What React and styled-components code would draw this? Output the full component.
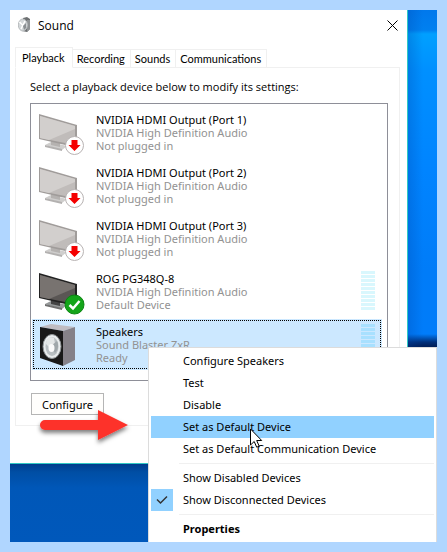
import React from "react";
import styled, { createGlobalStyle } from "styled-components";

const GlobalStyle = createGlobalStyle`
  * { box-sizing: border-box; }
  body {
    margin: 0;
    background: #b0d6ff;
    color: #000;
    font-family: "Noto Sans", "Open Sans", sans-serif;
    font-size: 11px;
  }
`;

const Page = styled.main`
  padding: 10px;
`;

const Desktop = styled.div`
  position: relative;
  overflow: hidden;
  padding: 0 29px 78px 0;
  background:
    linear-gradient(#003c8c, #004ea4 8px, #0057b8 24px, #0058bb) bottom / 100% 78px no-repeat,
    linear-gradient(90deg, rgba(0, 70, 170, 0.3), transparent 16px) right / 30px 100% no-repeat,
    linear-gradient(#0078ec, #0080f0 20px, #00a0ff 24px, #0090ff 60px, #0084ff 160px, #007cf8 260px, #007cfa 324px, #00307c 332px, #00205c 336px);
`;

const Window = styled.section`
  background: #fff;
  border-right: 1px solid #30c8c4;
  border-bottom: 1px solid #30c8c4;
`;

const TitleBar = styled.header`
  display: flex;
  align-items: center;
  gap: 7px;
  height: 30px;
  padding: 0 9px 0 8px;
`;

const Title = styled.h1`
  flex: 1;
  margin: 0;
  font-family: "Open Sans", "Noto Sans", sans-serif;
  font-size: 12px;
  font-weight: 400;
`;

const CloseButton = styled.button`
  display: flex;
  padding: 0;
  border: 0;
  background: none;
`;

const WindowBody = styled.div`
  padding: 7px 7px 37px 5px;
`;

const TabList = styled.div`
  display: flex;
  align-items: flex-end;
  height: 21px;
  margin-bottom: -1px;
`;

const Tab = styled.button`
  height: ${({ $active }) => ($active ? 21 : 19)}px;
  padding: 0 ${({ $active }) => ($active ? 7 : 5)}px 0 ${({ $active }) => ($active ? 6 : 4)}px;
  border: 1px solid #f0f0f0;
  border-left-width: ${({ $active }) => ($active ? 1 : 0)}px;
  border-bottom-color: ${({ $active }) => ($active ? "#fff" : "#f0f0f0")};
  background: #fff;
  color: #000;
  font-family: Lato, "Open Sans", sans-serif;
  font-size: 11px;
  line-height: 17px;
`;

const Panel = styled.div`
  padding: 10px 11px;
  border: 1px solid #f0f0f0;
`;

const Hint = styled.p`
  margin: 0 0 7px 3px;
  font-family: "Open Sans", "Noto Sans", sans-serif;
  line-height: 18px;
`;

const DeviceList = styled.ul`
  display: flex;
  flex-direction: column;
  gap: 2px;
  height: 278px;
  margin: 0 0 12px 3px;
  padding: 3px 5px 0 1px;
  border: 1px solid #8e8f98;
  list-style: none;
`;

const Device = styled.li`
  display: flex;
  gap: 11px;
  height: 51px;
  padding: 5px 7px;
  background: ${({ $selected }) => ($selected ? "#cce8ff" : "#fff")};
  outline: ${({ $selected }) => ($selected ? "1px dotted #000" : "none")};
  outline-offset: -2px;
`;

const DeviceText = styled.div`
  flex: 1;
  padding-top: 1px;
  line-height: 13px;
  white-space: nowrap;
`;

const DeviceName = styled.div`
  color: #000;
`;

const DeviceInfo = styled.div`
  color: #929292;
`;

const Meter = styled.div`
  display: grid;
  grid-auto-rows: 3px;
  gap: 1px;
  width: 14px;
`;

const MeterBar = styled.span`
  background: ${({ $selected }) => ($selected ? "#a8e0ff" : "#d9f7fd")};
`;

const ConfigureButton = styled.button`
  display: block;
  width: 73px;
  height: 22px;
  margin-left: 4px;
  padding: 0;
  border: 1px solid #b5b5b5;
  background: #fffefc;
  color: #000;
  font: inherit;
`;

const Menu = styled.div`
  position: absolute;
  top: 337px;
  left: 138px;
  right: 0;
  padding: 2px 2px 6px;
  border: 1px solid #dcdcdc;
  background: #fff;
`;

const MenuItem = styled.button`
  display: flex;
  align-items: center;
  gap: 10px;
  width: 100%;
  height: 22px;
  padding: 0;
  border: 0;
  background: ${({ $active }) => ($active ? "#91d1ff" : "transparent")};
  color: #000;
  font: inherit;
  font-weight: ${({ $bold }) => ($bold ? 700 : 400)};
  line-height: 20px;
  text-align: left;
  white-space: nowrap;
`;

const MenuCheck = styled.span`
  display: grid;
  place-items: center;
  width: 22px;
  height: 22px;
  background: ${({ $checked }) => ($checked ? "#91d1ff" : "transparent")};
`;

const Separator = styled.hr`
  height: 1px;
  margin: 3px 0 3px 28px;
  border: 0;
  background: #f0f0f0;
`;

const Arrow = styled.svg`
  position: absolute;
  top: 395px;
  left: 26px;
`;

const Cursor = styled.svg`
  position: absolute;
  top: 418px;
  left: 240px;
`;

const devices = [
  { name: "NVIDIA HDMI Output (Port 1)", info: "NVIDIA High Definition Audio", state: "Not plugged in", icon: "off" },
  { name: "NVIDIA HDMI Output (Port 2)", info: "NVIDIA High Definition Audio", state: "Not plugged in", icon: "off" },
  { name: "NVIDIA HDMI Output (Port 3)", info: "NVIDIA High Definition Audio", state: "Not plugged in", icon: "off" },
  { name: "ROG PG348Q-8", info: "NVIDIA High Definition Audio", state: "Default Device", icon: "default", meter: true },
  { name: "Speakers", info: "Sound Blaster ZxR", state: "Ready", icon: "speaker", meter: true, selected: true },
];

const menuItems = [
  { label: "Configure Speakers" },
  { label: "Test" },
  { label: "Disable" },
  { label: "Set as Default Device", active: true },
  { label: "Set as Default Communication Device" },
  null,
  { label: "Show Disabled Devices" },
  { label: "Show Disconnected Devices", checked: true },
  null,
  { label: "Properties", bold: true },
];

const tabs = ["Playback", "Recording", "Sounds", "Communications"];

function SoundIcon() {
  return (
    <svg width="13" height="16" viewBox="0 0 13 16" aria-hidden="true">
      <path d="M5 1l4-1 3 2v10l-3 3-5-1z" fill="#6d7072" />
      <path d="M9 3l3 0v9l-3 3z" fill="#8e9294" />
      <ellipse cx="4.800" cy="8" rx="4.500" ry="6" fill="#d4d8da" stroke="#b9bdbf" />
      <path d="M1.500 5l3 3M7 4L3 12" stroke="#fff" strokeWidth="1.500" />
      <path d="M5 9l3-3v5l-2 2z" fill="#8b9093" />
    </svg>
  );
}

function MonitorIcon({ plugged }) {
  return (
    <svg width="46" height="44" viewBox="0 0 46 44" aria-hidden="true">
      <path d="M6 33l6-3 16 4-5 4z" fill={plugged ? "#96999a" : "#cfcecd"} />
      <path d="M6 33l17 4v2L6 35z" fill={plugged ? "#707070" : "#b3b1b0"} />
      <path d="M12 28l9 3v4l-9-2z" fill={plugged ? "#444" : "#b5b2b0"} />
      <path d="M0 2l38 11v20l-3 2L0 27z" fill={plugged ? "#222" : "#a09c9a"} />
      <path d="M1 4l35 10v19L1 26z" fill={plugged ? "#5a5654" : "#c0bcba"} />
      <path d="M1 4l35 10v3L10 28l-9-2z" fill={plugged ? "#787370" : "#d2cfcd"} />
      {plugged ? (
        <g>
          <circle cx="35.500" cy="33.500" r="9.500" fill="#14a51a" stroke="#0a8511" />
          <path d="M30.500 34l3.500 3.500 6.500-7.500" fill="none" stroke="#fff" strokeWidth="2.500" />
        </g>
      ) : (
        <g>
          <circle cx="35.500" cy="33.500" r="9" fill="#fff" stroke="#b8b3b3" />
          <path d="M32.500 28h6v5h3l-6 6-6-6h3z" fill="#f40000" />
        </g>
      )}
    </svg>
  );
}

function SpeakerIcon() {
  return (
    <svg width="46" height="44" viewBox="0 0 46 44" aria-hidden="true">
      <path d="M1 3L12 0l24 3-12 4z" fill="#c0bdc2" />
      <path d="M24 7l12-4v33l-12 6z" fill="#858188" />
      <path d="M1 3l23 4v35L1 34z" fill="#191919" />
      <ellipse cx="13" cy="22.500" rx="9" ry="12" fill="#e9eced" stroke="#8f9496" />
      <ellipse cx="13" cy="22.500" rx="6.500" ry="9.500" fill="#b9bfc2" />
      <path d="M7 20c0-5 4-8 8-6l1 6-5 4z" fill="#e4e7e7" />
      <path d="M12 22l6-5c2 4 1 9-2 12z" fill="#a0a7aa" />
      <ellipse cx="12.500" cy="24" rx="3" ry="4" fill="#fafafa" />
    </svg>
  );
}

function App() {
  return (
    <Page>
      <GlobalStyle />
      <Desktop>
        <Window>
          <TitleBar>
            <SoundIcon />
            <Title>Sound</Title>
            <CloseButton aria-label="Close">
              <svg width="11" height="11" viewBox="0 0 11 11">
                <path d="M.5.5l10 10m0-10l-10 10" stroke="#000" strokeWidth="1" />
              </svg>
            </CloseButton>
          </TitleBar>
          <WindowBody>
            <TabList role="tablist">
              {tabs.map((tab, i) => (
                <Tab key={tab} role="tab" aria-selected={i === 0} $active={i === 0}>
                  {tab}
                </Tab>
              ))}
            </TabList>
            <Panel role="tabpanel">
              <Hint>Select a playback device below to modify its settings:</Hint>
              <DeviceList>
                {devices.map((d) => (
                  <Device key={d.name} $selected={d.selected}>
                    {d.icon === "speaker" ? <SpeakerIcon /> : <MonitorIcon plugged={d.icon === "default"} />}
                    <DeviceText>
                      <DeviceName>{d.name}</DeviceName>
                      <DeviceInfo>{d.info}</DeviceInfo>
                      <DeviceInfo>{d.state}</DeviceInfo>
                    </DeviceText>
                    {d.meter && (
                      <Meter>
                        {Array.from({ length: 10 }, (_, i) => (
                          <MeterBar key={i} $selected={d.selected} />
                        ))}
                      </Meter>
                    )}
                  </Device>
                ))}
              </DeviceList>
              <ConfigureButton>Configure</ConfigureButton>
            </Panel>
          </WindowBody>
        </Window>

        <Arrow width="98" height="54" viewBox="0 0 98 54" aria-hidden="true">
          <defs>
            <filter id="shadow" x="-10%" y="-20%" width="120%" height="150%">
              <feDropShadow dx="0" dy="3" stdDeviation="2" floodOpacity="0.5" />
            </filter>
          </defs>
          <path d="M19 15H72V5L102 20 72 35V25H19a5 5 0 0 1 0-10z" transform="translate(-10 0)" fill="#fd302c" filter="url(#shadow)" />
        </Arrow>

        <Menu role="menu">
          {menuItems.map((item, i) =>
            item ? (
              <MenuItem key={item.label} role="menuitem" $active={item.active} $bold={item.bold}>
                <MenuCheck $checked={item.checked}>
                  {item.checked && (
                    <svg width="12" height="10" viewBox="0 0 12 10">
                      <path d="M1 4.500l3.500 3.500L11 1.500" fill="none" stroke="#333" strokeWidth="1.500" />
                    </svg>
                  )}
                </MenuCheck>
                {item.label}
              </MenuItem>
            ) : (
              <Separator key={i} />
            )
          )}
        </Menu>

        <Cursor width="13" height="20" viewBox="0 0 13 20" aria-hidden="true">
          <path d="M.5 1v16l3.700-3.500 2.500 5.700 2.500-1-2.500-5.700h5z" fill="#fff" stroke="#000" />
        </Cursor>
      </Desktop>
    </Page>
  );
}

export default App;
